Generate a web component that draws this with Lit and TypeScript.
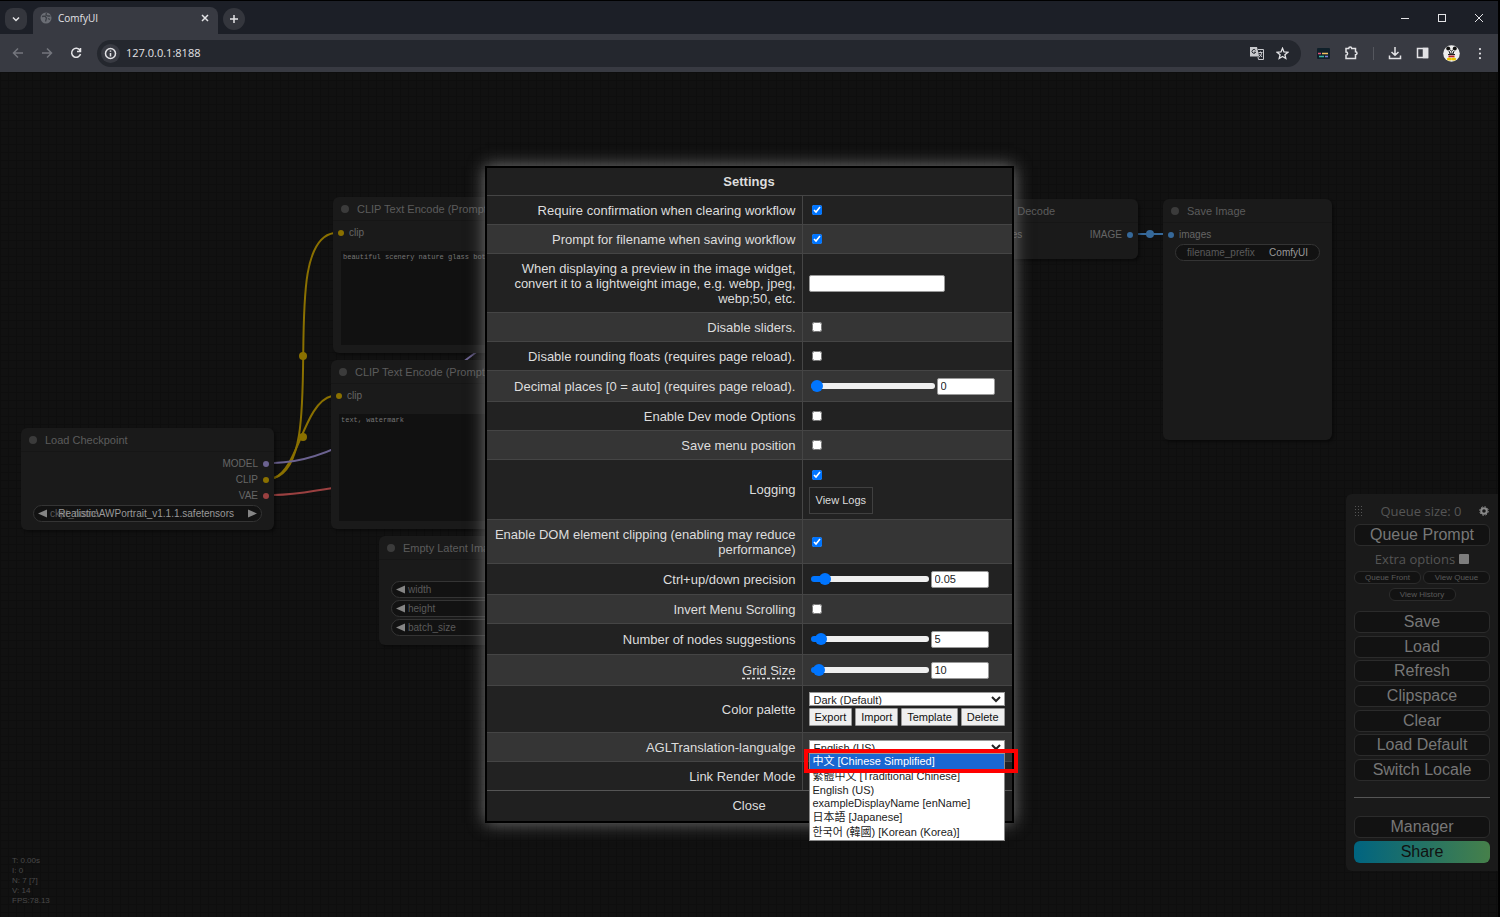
import { LitElement, html, css, svg, nothing } from "lit";
import { customElement } from "lit/decorators.js";
import { styleMap } from "lit/directives/style-map.js";
import { classMap } from "lit/directives/class-map.js";

const ARIAL = css`"Liberation Sans", Arial, "Noto Sans CJK SC", "Noto Sans CJK KR", sans-serif`;
const SYSTEM = css`"Open Sans", "Segoe UI", sans-serif`;

@customElement("browser-bar")
export class BrowserBar extends LitElement {
  static styles = css`
    :host { display: block; color: #e3e3e6; font: 12px/16px ${SYSTEM}; }
    button { all: unset; box-sizing: border-box; display: grid; place-items: center; }
    svg { display: block; fill: none; stroke: currentColor; stroke-width: 1.5; }
    .strip { display: flex; align-items: flex-end; height: 33px; border-top: 1px solid #000; background: #1c1f27; }
    .search { width: 22px; height: 22px; margin: 0 6px 4px 5px; border-radius: 8px; background: #34363d; }
    .tab { box-sizing: border-box; display: flex; align-items: center; width: 185px; height: 27px; padding: 0 7px 5px; border-radius: 8px 8px 0 0; background: #383a42; font-size: 10px; }
    .tab span { flex: 1; padding-left: 6px; }
    .plus { width: 22px; height: 22px; margin: 0 0 4px 5px; border-radius: 50%; background: #34363d; }
    .window { display: flex; gap: 27px; margin: 0 14px 11px auto; }
    .tools { display: flex; align-items: center; height: 38px; background: #383a42; padding-left: 12px; }
    .nav { display: flex; gap: 17px; margin-right: 15px; }
    .off { color: #74767d; }
    .box { display: flex; flex: 1; align-items: center; height: 27px; border-radius: 14px; background: #24272e; padding: 0 12px 0 4px; }
    .info { width: 19px; height: 19px; border-radius: 50%; background: #383a42; margin-right: 6px; }
    input { all: unset; flex: 1; font: 11px/20px ${SYSTEM}; }
    .marks { display: flex; gap: 12px; }
    .right { display: flex; align-items: center; gap: 14px; padding: 0 12px 0 16px; }
    .rule { width: 1px; height: 13px; background: #55575e; }
  `;

  render() {
    return html`
      <div class="strip">
        <button class="search" aria-label="Search tabs"><svg width="10" height="10"><path d="M2 3.500l3 3 3-3"/></svg></button>
        <div class="tab">
          <svg width="12" height="12" viewBox="0 0 12 12"><circle cx="6" cy="6" r="5.500" fill="#6b6e75" stroke="none"/><path d="M2 4.500l3-.5 1.500 2-1 3.500M6.500 1l-.5 2 2 1 2.500 0M8 6.500l2 1" stroke="#3d4047" stroke-width="1.300"/></svg>
          <span>ComfyUI</span>
          <button aria-label="Close tab"><svg width="12" height="12"><path d="M3 3l6 6M9 3l-6 6"/></svg></button>
        </div>
        <button class="plus" aria-label="New tab"><svg width="12" height="12"><path d="M6 2v8M2 6h8"/></svg></button>
        <div class="window">
          <button aria-label="Minimize"><svg width="10" height="10"><path d="M1 5.500h8" stroke-width="1"/></svg></button>
          <button aria-label="Maximize"><svg width="10" height="10"><rect x="1.500" y="1.500" width="7" height="7" stroke-width="1"/></svg></button>
          <button aria-label="Close"><svg width="10" height="10"><path d="M1 1l8 8M9 1l-8 8" stroke-width="1"/></svg></button>
        </div>
      </div>
      <div class="tools">
        <div class="nav">
          <button class="off" aria-label="Back"><svg width="12" height="12"><path d="M11 6H1.500M6 1.500L1.500 6 6 10.500"/></svg></button>
          <button class="off" aria-label="Forward"><svg width="12" height="12"><path d="M1 6h9.500M6 1.500L10.500 6 6 10.500"/></svg></button>
          <button aria-label="Reload"><svg width="12" height="12"><path d="M10 3.500A4.500 4.500 0 1 0 10.500 7M10.500 1v3.500H7"/></svg></button>
        </div>
        <div class="box">
          <button class="info" aria-label="Site information"><svg width="13" height="13"><circle cx="6.500" cy="6.500" r="5"/><path d="M6.500 6v3.500M6.500 3.500v1.300"/></svg></button>
          <input aria-label="Address" value="127.0.0.1:8188">
          <div class="marks">
            <button aria-label="Translate"><svg width="14" height="14" viewBox="0 0 14 14"><path d="M0 1h7l2.200 9.500H0z" fill="#c8c9cd" stroke="none"/><path d="M8 3.500h5.500v10H8.500L8 11" stroke="#c8c9cd" stroke-width="1"/><path d="M5.500 4.300a1.900 1.900 0 1 0 .2 1.900H4" stroke="#24272e" stroke-width="1"/><path d="M8.500 6.500h4M10.500 5.500v1M9 11c2-1 2.500-3 2.500-4M9.500 8l2.500 3" stroke="#c8c9cd" stroke-width="1"/></svg></button>
            <button aria-label="Bookmark"><svg width="13" height="13" viewBox="0 0 13 13"><path d="M6.500 1.300l1.500 3.600 3.900.3-3 2.500.9 3.800-3.300-2-3.300 2 .9-3.800-3-2.500 3.900-.3z" stroke-width="1.300"/></svg></button>
          </div>
        </div>
        <div class="right">
          <button aria-label="Dashboard extension"><svg width="13" height="11" stroke="none"><rect width="13" height="11" rx="1" fill="#10202a" stroke="none"/><path d="M1 5.500h3" stroke="#e0527a"/><path d="M5 5.500h6" stroke="#f0c060"/><path d="M2 8.500h5" stroke="#39b6a8"/><path d="M8 8.500h3" stroke="#7a82d8"/></svg></button>
          <button aria-label="Extensions"><svg width="15" height="14" viewBox="0 0 15 14"><path d="M2 2.500h2.700a1.500 1.500 0 0 1 3 0H11.500v3.200a1.500 1.500 0 0 1 0 3V12.500H2V9.200a1.600 1.600 0 0 0 0-3.200z"/></svg></button>
          <span class="rule"></span>
          <button aria-label="Downloads"><svg width="14" height="14"><path d="M7 1v8M3.500 6L7 9.300 10.500 6M1.500 9.500v3h11v-3"/></svg></button>
          <button aria-label="Side panel"><svg width="13" height="12"><rect x="1.500" y="1.500" width="10" height="9"/><path d="M7.500 1.500h4v9h-4z" fill="currentColor"/></svg></button>
          <button aria-label="Profile"><svg width="17" height="17" viewBox="0 0 17 17" stroke="none"><circle cx="8.500" cy="8.500" r="8.300" fill="#eee" stroke="none"/><circle cx="5.200" cy="3.500" r="2" fill="#111" stroke="none"/><circle cx="11.800" cy="3.500" r="2" fill="#111" stroke="none"/><path d="M7 4.500l1.500 2 1.500-2M6 6l1 3h3l1-3M7.500 8h2M5 9.500l7 0" stroke="#222" stroke-width="1"/><path d="M5.500 10.500h6v1.800h-6z" fill="#b3202a" stroke="none"/><ellipse cx="6.300" cy="14" rx="2.500" ry="1.500" fill="#eec400" stroke="none"/><ellipse cx="10.700" cy="14" rx="2.500" ry="1.500" fill="#eec400" stroke="none"/></svg></button>
          <button aria-label="Browser menu"><svg width="12" height="13"><path d="M6 2v.1M6 6.500v.1M6 11v.1" stroke-width="2.200" stroke-linecap="round"/></svg></button>
        </div>
      </div>`;
  }
}

interface Slot { label: string; color: string; out?: boolean }
interface Widget { label: string; value?: string; arrows?: boolean }
interface GraphNode { title: string; x: number; y: number; w: number; h: number; slots: Slot[]; widgets?: Widget[]; text?: string; name?: string }

const CLIP = "#8a7000", MODEL = "#6b6290", VAE = "#9a4040", IMAGE = "#36699a";

const NODES: GraphNode[] = [
  { title: "Load Checkpoint", x: 21, y: 356, w: 253, h: 102,
    slots: [{ label: "MODEL", color: MODEL, out: true }, { label: "CLIP", color: CLIP, out: true }, { label: "VAE", color: VAE, out: true }],
    widgets: [{ label: "ckpt_name", value: "Realistic\\AWPortrait_v1.1.1.safetensors", arrows: true }] },
  { title: "CLIP Text Encode (Prompt)", x: 333, y: 125, w: 338, h: 156,
    slots: [{ label: "clip", color: CLIP }], text: "beautiful scenery nature glass bottle landscape", name: "Positive prompt" },
  { title: "CLIP Text Encode (Prompt)", x: 331, y: 288, w: 340, h: 169,
    slots: [{ label: "clip", color: CLIP }], text: "text, watermark", name: "Negative prompt" },
  { title: "Empty Latent Image", x: 379, y: 464, w: 252, h: 109,
    slots: [{ label: "LATENT", color: "#8a5a80", out: true }],
    widgets: [{ label: "width", value: "512", arrows: true }, { label: "height", value: "512", arrows: true }, { label: "batch_size", value: "1", arrows: true }] },
  { title: "VAE Decode", x: 969, y: 127, w: 169, h: 60,
    slots: [{ label: "samples", color: "#8a5a80" }, { label: "IMAGE", color: IMAGE, out: true }] },
  { title: "Save Image", x: 1163, y: 127, w: 169, h: 241,
    slots: [{ label: "images", color: IMAGE }], widgets: [{ label: "filename_prefix", value: "ComfyUI" }] },
];

@customElement("node-graph")
export class NodeGraph extends LitElement {
  static styles = css`
    :host {
      display: block; position: absolute; inset: 0; overflow: hidden; color: #666; font: 10px/16px ${ARIAL};
      background: repeating-linear-gradient(90deg, #0e0e0e 0 1px, transparent 1px 8px), repeating-linear-gradient(#0e0e0e 0 1px, transparent 1px 8px), #111;
    }
    .links { position: absolute; inset: 0; width: 100%; height: 100%; fill: none; stroke-width: 2; }
    .node { position: absolute; box-sizing: border-box; display: flex; flex-direction: column; border-radius: 6px; background: #1a1a1a; box-shadow: 2px 2px 3px #0006; }
    .title { display: flex; align-items: center; gap: 8px; height: 24px; margin: 0; padding-left: 8px; border-bottom: 1px solid #161616; box-sizing: border-box; color: #5c5c5c; font: 11px/24px ${ARIAL}; white-space: nowrap; }
    .title::before { content: ""; width: 8px; height: 8px; border-radius: 50%; background: #3b3b3b; }
    .slots { display: grid; margin-top: 4px; }
    .slot { display: flex; align-items: center; gap: 5px; height: 16px; padding: 0 5px; }
    .pair { grid-template-columns: 1fr 1fr; }
    .out { flex-direction: row-reverse; }
    .dot { width: 6px; height: 6px; border-radius: 50%; }
    .widgets { display: grid; gap: 2px; padding: 1px 12px; }
    .pill { box-sizing: border-box; position: relative; display: flex; align-items: center; justify-content: space-between; height: 17px; padding: 0 11px; border: 1px solid #343434; border-radius: 9px; background: #121212; color: #5a5a5a; }
    .pill b { font-weight: 400; color: #999; }
    .arrows { justify-content: flex-start; padding: 0 4px; }
    .arrows .name { padding-left: 3px; }
    .arrows b { position: absolute; right: 27px; }
    .arrows .next { margin-left: auto; }
    .tri { fill: #858585; }
    textarea { flex: 1; margin: 10px 8px 8px; box-sizing: border-box; padding: 2px; border: 0; resize: none; outline: 0; background: #111; color: #757575; font: 7px/9px "Liberation Mono", monospace; }
    .stats { position: absolute; left: 12px; bottom: 11px; margin: 0; color: #4a4a4a; font: 8px/10px ${ARIAL}; }
  `;

  private widget(w: Widget) {
    return html`<div class=${classMap({ pill: true, arrows: !!w.arrows })}>
      ${w.arrows ? html`<svg class="tri" width="9" height="9"><path d="M9 .5v8L0 4.500z"/></svg>` : nothing}
      <span class="name">${w.label}</span><b>${w.value}</b>
      ${w.arrows ? html`<svg class="tri next" width="9" height="9"><path d="M0 .5v8l9-4z"/></svg>` : nothing}
    </div>`;
  }

  private node(n: GraphNode) {
    const pair = n.slots.length === 2;
    return html`<section class="node" style=${styleMap({ left: `${n.x}px`, top: `${n.y}px`, width: `${n.w}px`, height: `${n.h}px` })}>
      <h3 class="title">${n.title}</h3>
      <div class=${classMap({ slots: true, pair })}>
        ${n.slots.map((s) => html`<div class=${classMap({ slot: true, out: !!s.out })}><i class="dot" style=${styleMap({ background: s.color })}></i>${s.label}</div>`)}
      </div>
      ${n.text ? html`<textarea aria-label=${n.name ?? ""} spellcheck="false" .value=${n.text}></textarea>` : nothing}
      ${n.widgets ? html`<div class="widgets">${n.widgets.map((w) => this.widget(w))}</div>` : nothing}
    </section>`;
  }

  render() {
    return html`
      <svg class="links">
        ${svg`
        <g stroke=${CLIP}><path d="M274 406C331 390 275 170 334 161"/><path d="M274 406C298 398 304 330 332 324"/></g>
        <g fill=${CLIP}><circle cx="303" cy="284" r="4"/><circle cx="303" cy="365" r="4"/></g>
        <path stroke=${MODEL} d="M274 391C350 390 420 320 490 270"/>
        <path stroke=${VAE} d="M274 423C300 423 315 418 340 415"/>
        <path stroke=${IMAGE} d="M1138 162h25"/><circle cx="1150" cy="162" r="4" fill=${IMAGE}/>`}
      </svg>
      ${NODES.map((n) => this.node(n))}
      <p class="stats">T: 0.00s<br>I: 0<br>N: 7 [7]<br>V: 14<br>FPS:78.13</p>`;
  }
}

@customElement("queue-menu")
export class QueueMenu extends LitElement {
  static styles = css`
    :host { position: absolute; top: 422px; right: 0; box-sizing: border-box; display: flex; flex-direction: column; width: 152px; padding: 4px 8px 8px; border-radius: 6px 0 0 6px; background: #1a1a1a; color: #555; font: 13px/24px ${SYSTEM}; }
    button { box-sizing: border-box; height: 22px; padding: 0; border: 1px solid #2b2b2b; border-radius: 6px; background: #121212; color: #777; font: 16px/20px ${ARIAL}; }
    .head { display: flex; align-items: center; justify-content: space-between; height: 26px; }
    .gear { display: grid; place-items: center; width: 12px; height: 12px; border: 0; background: none; }
    .extra { display: flex; align-items: center; justify-content: center; gap: 4px; height: 25px; }
    .extra input { appearance: none; width: 10px; height: 10px; margin: 0; border-radius: 1px; background: #7d7d7d; }
    .mini { display: flex; flex-wrap: wrap; justify-content: center; gap: 4px 2px; }
    .mini button { width: 67px; height: 13px; font-size: 8px; line-height: 11px; color: #5a5a5a; }
    .list { display: flex; flex-direction: column; justify-content: space-between; height: 170px; margin-top: 10px; }
    hr { width: 100%; margin: 16px 0 18px; border: 0; border-top: 1px solid #555; }
    .share { margin-top: 3px; border: 0; background: linear-gradient(90deg, #006480, #46804a); color: #111; }
  `;

  render() {
    return html`
      <div class="head">
        <svg width="10" height="10" fill="#555"><path d="M1 0h1v1H1zM4 0h1v1H4zM7 0h1v1H7zM1 3h1v1H1zM4 3h1v1H4zM7 3h1v1H7zM1 6h1v1H1zM4 6h1v1H4zM7 6h1v1H7zM1 9h1v1H1zM4 9h1v1H4zM7 9h1v1H7z"/></svg>
        <span>Queue size: 0</span>
        <button class="gear" aria-label="Settings"><svg width="10" height="10" viewBox="0 0 10 10" fill="none"><circle cx="5" cy="5" r="2.800" stroke="#8a8a8a" stroke-width="2"/><circle cx="5" cy="5" r="4.300" stroke="#8a8a8a" stroke-dasharray="1.700 1.677"/></svg></button>
      </div>
      <button>Queue Prompt</button>
      <div class="extra"><label for="extra">Extra options</label><input id="extra" type="checkbox"></div>
      <div class="mini"><button>Queue Front</button><button>View Queue</button><button>View History</button></div>
      <div class="list">
        ${["Save", "Load", "Refresh", "Clipspace", "Clear", "Load Default", "Switch Locale"].map((t) => html`<button>${t}</button>`)}
      </div>
      <hr>
      <button>Manager</button>
      <button class="share">Share</button>`;
  }
}

type Kind = "check" | "text" | "slider" | "log" | "palette" | "language" | "mode";
interface Setting { id: string; label: string; kind: Kind; on?: boolean; value?: number; max?: number; step?: number; wide?: boolean; hint?: string }

const SETTINGS: Setting[] = [
  { id: "confirm", label: "Require confirmation when clearing workflow", kind: "check", on: true },
  { id: "filename", label: "Prompt for filename when saving workflow", kind: "check", on: true },
  { id: "preview", label: "When displaying a preview in the image widget, convert it to a lightweight image, e.g. webp, jpeg, webp;50, etc.", kind: "text" },
  { id: "sliders", label: "Disable sliders.", kind: "check" },
  { id: "rounding", label: "Disable rounding floats (requires page reload).", kind: "check" },
  { id: "decimals", label: "Decimal places [0 = auto] (requires page reload).", kind: "slider", value: 0, max: 6, step: 1, wide: true },
  { id: "dev", label: "Enable Dev mode Options", kind: "check" },
  { id: "position", label: "Save menu position", kind: "check" },
  { id: "logging", label: "Logging", kind: "log", on: true },
  { id: "clipping", label: "Enable DOM element clipping (enabling may reduce performance)", kind: "check", on: true },
  { id: "precision", label: "Ctrl+up/down precision", kind: "slider", value: 0.05, max: 0.65, step: 0.01 },
  { id: "invert", label: "Invert Menu Scrolling", kind: "check" },
  { id: "suggestions", label: "Number of nodes suggestions", kind: "slider", value: 5, max: 120, step: 1 },
  { id: "grid", label: "Grid Size", kind: "slider", value: 10, max: 500, step: 1, hint: "Size of the snapping grid" },
  { id: "palette", label: "Color palette", kind: "palette" },
  { id: "language", label: "AGLTranslation-langualge", kind: "language" },
  { id: "mode", label: "Link Render Mode", kind: "mode" },
];

const LANGUAGES = ["中文 [Chinese Simplified]", "繁體中文 [Traditional Chinese]", "English (US)", "exampleDisplayName [enName]", "日本語 [Japanese]", "한국어 (韓國) [Korean (Korea)]"];

@customElement("settings-dialog")
export class SettingsDialog extends LitElement {
  static styles = css`
    :host { display: block; border: 2px solid #000; background: #202020; color: #ddd; font: 13px/15px ${ARIAL}; box-shadow: 0 0 16px #777; }
    h2 { margin: 0; font: bold 13px/27px ${ARIAL}; text-align: center; }
    table { border-collapse: separate; border-spacing: 0; }
    th, td { box-sizing: border-box; height: 29px; padding: 0 6px; border-top: 1px solid #454545; }
    th { width: 315px; font-weight: 400; text-align: right; }
    td { width: 210px; padding-right: 7px; border-left: 1px solid #454545; }
    tr { background: #222; }
    tr:nth-child(even) { background: #353535; }
    .slider > * { height: 31px; }
    .text > * { height: 59px; }
    .log > * { height: 60px; }
    .log > td { padding-top: 4px; }
    .clipping > * { height: 44px; }
    .palette > * { height: 47px; }
    .hint { text-decoration: underline dashed; text-underline-offset: 3px; }
    input[type="checkbox"] { display: block; width: 10px; height: 10px; margin: 0 3px; }
    .field { box-sizing: border-box; height: 17px; padding: 0 3px; border: 1px solid #999; border-radius: 2px; background: #fff; color: #222; font: 11px/15px ${ARIAL}; }
    .field[type="text"] { display: block; width: 136px; }
    .field[type="number"] { width: 58px; }
    .pair { display: flex; align-items: center; gap: 2px; padding-left: 2px; }
    .range { appearance: none; width: 118px; height: 6px; margin: 0; border-radius: 3px; background: #efefef; }
    .range.wide { width: 124px; }
    .range::-webkit-slider-thumb { appearance: none; width: 12px; height: 12px; border-radius: 50%; background: #0075ff; }
    .stack { display: grid; gap: 7px; justify-items: start; }
    .logs { height: 27px; padding: 0 6px; border: 1px solid #404040; background: #202020; color: #ddd; font: 11px/15px ${ARIAL}; }
    select { display: block; box-sizing: border-box; width: 100%; height: 14px; padding: 0; border: 1px solid #999; border-radius: 0; background: #fff; color: #222; font: 11px/12px ${ARIAL}; }
    .actions { display: flex; justify-content: space-between; margin-top: 2px; }
    .actions button { height: 18px; padding: 0 5px; border: 1px solid #999; border-radius: 1px; background: #efefef; color: #111; font: 11px/14px ${ARIAL}; }
    .open { position: relative; }
    .menu { position: absolute; z-index: 2; top: 14px; left: 0; right: 0; box-sizing: border-box; margin: 0; padding: 0; border: 1px solid #888; border-top: 0; background: #fff; color: #222; list-style: none; font: 11px/13px ${ARIAL}; white-space: nowrap; }
    .menu li { padding-left: 3px; }
    .menu .tall { line-height: 15px; }
    .menu .active { background: #1967d2; color: #fff; }
    .marker { position: absolute; z-index: 3; top: 9px; left: -5px; right: -13px; box-sizing: border-box; height: 24px; border: 4px solid #f00; pointer-events: none; }
    .close { display: block; box-sizing: border-box; width: 100%; height: 31px; padding: 0 0 2px; border: 0; border-top: 1px solid #555; background: #202020; color: #ddd; font: 13px/15px ${ARIAL}; }
  `;

  private control(s: Setting) {
    switch (s.kind) {
      case "check":
        return html`<input id=${s.id} type="checkbox" ?checked=${s.on}>`;
      case "text":
        return html`<input id=${s.id} class="field" type="text">`;
      case "slider": {
        const share = ((s.value ?? 0) / (s.max ?? 1)) * 100;
        return html`<div class="pair">
          <input id=${s.id} class=${classMap({ range: true, wide: !!s.wide })} type="range" min="0" max=${s.max} step=${s.step} .value=${String(s.value)}
            style=${styleMap({ backgroundImage: `linear-gradient(90deg, #0075ff calc(6px + ${share}%), transparent calc(6px + ${share}%))` })}>
          <input class="field" type="number" aria-label="${s.label} value" step="any" .value=${String(s.value)}>
        </div>`;
      }
      case "log":
        return html`<div class="stack"><input id=${s.id} type="checkbox" ?checked=${s.on}><button class="logs">View Logs</button></div>`;
      case "palette":
        return html`<select id=${s.id}><option>Dark (Default)</option></select>
          <div class="actions"><button>Export</button><button>Import</button><button>Template</button><button>Delete</button></div>`;
      case "language":
        return html`<div class="open">
          <select id=${s.id}><option>English (US)</option></select>
          <ul class="menu" role="listbox" aria-label="Languages">
            ${LANGUAGES.map((l, i) => html`<li role="option" aria-selected=${i === 0 ? "true" : "false"} class=${classMap({ active: i === 0, tall: i < 2 || i > 3 })}>${l}</li>`)}
          </ul>
          <div class="marker"></div>
        </div>`;
      case "mode":
        return html`<select id=${s.id}><option>Spline</option></select>`;
    }
  }

  render() {
    return html`
      <h2>Settings</h2>
      <table>
        <tbody>
          ${SETTINGS.map((s) => html`<tr class="${s.kind} ${s.id}">
            <th scope="row"><label for=${s.id} class=${s.hint ? "hint" : ""} title=${s.hint ?? nothing}>${s.label}</label></th>
            <td>${this.control(s)}</td>
          </tr>`)}
        </tbody>
      </table>
      <button class="close">Close</button>`;
  }
}

@customElement("app-root")
export class AppRoot extends LitElement {
  static styles = css`
    :host { display: flex; flex-direction: column; box-sizing: border-box; height: 100vh; border-right: 2px solid #000; background: #101010; overflow: hidden; }
    .stage { position: relative; flex: 1; min-height: 0; }
    .overlay { position: absolute; inset: 0; display: grid; place-items: center; }
  `;

  render() {
    return html`
      <browser-bar></browser-bar>
      <main class="stage">
        <node-graph></node-graph>
        <queue-menu></queue-menu>
        <div class="overlay"><settings-dialog role="dialog" aria-label="Settings"></settings-dialog></div>
      </main>`;
  }
}
